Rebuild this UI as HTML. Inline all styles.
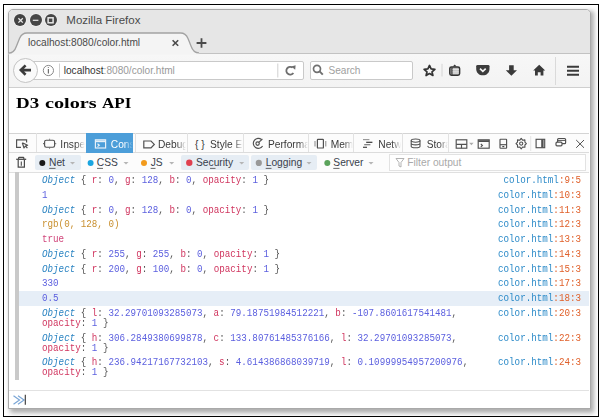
<!DOCTYPE html>
<html><head><meta charset="utf-8">
<style>
*{margin:0;padding:0;box-sizing:border-box}
html,body{width:600px;height:419px;background:#fff;overflow:hidden;position:relative;font-family:"Liberation Sans",sans-serif}
.a{position:absolute}
.t{position:absolute;white-space:pre;line-height:1}
svg{position:absolute;overflow:visible}
.mono{font-family:"Liberation Mono",monospace;font-size:10px;line-height:10px;transform:scaleX(0.922);transform-origin:0 0}
.loc{transform-origin:100% 0}
.ot{color:#2b84c2;font-style:italic}
.gy{color:#555}
.pn{color:#d0345e}
.nu{color:#5b5fdf}
.st{color:#c99030}
.bo{color:#d0447a}
.lf{color:#2b8ac8}
.ll{color:#e0602a}
.row{left:19px;width:570px}
.sel{background:#e6eef7}
.dt{font-size:10.2px;color:#3a3a3a}
.fl{font-size:10.25px;color:#393f4c}
.sep{width:1px;background:#e2e2e2}

.hd{top:94.6px;font-family:'Liberation Serif',serif;font-weight:bold;font-size:15.5px;transform-origin:0 0;color:#000}

</style></head><body>
<div class="a" style="left:4px;top:5px;width:594px;height:411px;overflow:hidden"><div class="a" style="left:6px;top:6px;width:584px;height:402px;background:#acacac;filter:blur(2.4px)"></div></div>
<!-- window -->
<div class="a" style="left:8px;top:9px;width:583px;height:400px;border:1px solid #a9a9a9;border-radius:5px 5px 0 0;background:#fff"></div>
<!-- titlebar -->
<div class="a" style="left:9px;top:10px;width:581px;height:43px;background:#e6e6e6;border-radius:4px 4px 0 0"></div>
<div class="a" style="left:14.4px;top:14.3px;width:12px;height:12px;border-radius:50%;background:#434343;box-shadow:0 0 0 0.6px #f4f4f4"></div>
<div class="a" style="left:29.6px;top:14.3px;width:12px;height:12px;border-radius:50%;background:#464646;box-shadow:0 0 0 0.6px #f4f4f4"></div>
<div class="a" style="left:44.6px;top:14.3px;width:12px;height:12px;border-radius:50%;background:#464646;box-shadow:0 0 0 0.6px #f4f4f4"></div>
<svg style="left:0;top:0" width="600" height="40"><g stroke="#e8e8e8" stroke-width="1.3" fill="none"><path d="M18.4 18.2 L22.8 22.6 M22.8 18.2 L18.4 22.6"/><path d="M32.8 20.3 H38.4" stroke-width="1.2"/><rect x="48.1" y="17.8" width="5" height="5" stroke-width="1.5"/></g></svg>
<div class="t" style="left:66.3px;top:15px;font-size:11.5px;color:#4a4a4a">Mozilla Firefox</div>
<!-- tab -->
<!-- nav toolbar -->
<div class="a" style="left:9px;top:53px;width:581px;height:35px;background:linear-gradient(#f7f7f7,#f3f3f3);border-top:1px solid #c2c2c2;border-bottom:1px solid #cfcfcf"></div>
<svg style="left:0;top:0" width="600" height="60"><path d="M8.5 54.5 V53.2 C13 53.2 15 50.5 16.5 46 L19.5 38.5 C21 35 23 33 27 33 L180.5 33 C184.5 33 186.5 35 188 38.5 L191 46 C192.5 50.5 194.5 52.9 199 52.9 V54.5 Z" fill="#f4f4f4"/><path d="M8.5 53.2 C13 53.2 15 50.5 16.5 46 L19.5 38.5 C21 35 23 33 27 33 L180.5 33 C184.5 33 186.5 35 188 38.5 L191 46 C192.5 50.5 194.5 52.9 199 52.9" fill="none" stroke="#a2a2a2" stroke-width="1.3"/></svg>
<div class="t" style="left:28px;top:38.4px;font-size:10.2px;color:#4a4a4a">localhost:8080/color.html</div>
<svg style="left:0;top:0" width="600" height="60"><g stroke="#4a4a4a" stroke-width="1.6" fill="none"><path d="M172.6 40.2 L178.2 45.8 M178.2 40.2 L172.6 45.8"/></g><g stroke="#4a4a4a" stroke-width="1.8"><path d="M196.6 43 H206.4 M201.5 38.3 V47.8"/></g></svg>
<div class="a" style="left:30px;top:61px;width:274px;height:19px;background:#fff;border:1px solid #c9c9c9;border-radius:2px"></div>
<div class="a" style="left:13px;top:57.5px;width:25px;height:25px;border-radius:50%;background:#fafafa;border:1px solid #c4c4c4"></div>
<svg style="left:0;top:0" width="600" height="90"><g fill="none" stroke="#3c3c3c" stroke-width="2.6" stroke-linejoin="miter"><path d="M21.5 70.1 H31 M25.6 65.4 L20.8 70.1 L25.6 74.8"/></g>
<circle cx="48.4" cy="70.5" r="5.1" fill="none" stroke="#8a8a8a" stroke-width="1"/><path d="M48.4 69 V73.5 M48.4 67.3 V67.9" stroke="#707070" stroke-width="1.2"/>
<path d="M59.5 63.5 V77.5" stroke="#d0d0d0" stroke-width="1"/>
<path d="M277.8 63.5 V77.5" stroke="#d0d0d0" stroke-width="1"/>
<path d="M292.6 67.6 A3.9 3.9 0 1 0 293.4 73" fill="none" stroke="#6e6e6e" stroke-width="1.8"/><path d="M291.2 66.4 L295.6 65.2 L295.2 69.8 Z" fill="#6e6e6e"/>
</svg>
<div class="t" style="left:63.75px;top:66px;font-size:10.1px;color:#9a9a9a"><span style="color:#333">localhost</span>:8080/color.html</div>
<div class="a" style="left:309.6px;top:61px;width:103px;height:18.5px;background:#fff;border:1px solid #c9c9c9;border-radius:2px"></div>
<svg style="left:0;top:0" width="600" height="90"><circle cx="317" cy="68.8" r="3.5" fill="none" stroke="#707070" stroke-width="1.7"/><path d="M319.6 71.4 L322.8 74.6" stroke="#707070" stroke-width="2"/></svg>
<div class="t" style="left:328.5px;top:66.2px;font-size:10.1px;color:#a0a0a0">Search</div>
<svg style="left:0;top:0" width="600" height="90">
<path d="M429.5 65.4 L431.1 68.9 L434.9 69.3 L432 71.8 L432.9 75.5 L429.5 73.6 L426.1 75.5 L427 71.8 L424.1 69.3 L427.9 68.9 Z" fill="none" stroke="#333" stroke-width="1.7" stroke-linejoin="round"/>
<path d="M442 63.8 V76.5" stroke="#d4d4d4"/>
<rect x="449.8" y="67" width="9.8" height="8.2" rx="1.6" fill="#bdbdbd" stroke="#333" stroke-width="1.5"/><path d="M452.8 66.6 L454.7 64.4 L456.6 66.6 Z" fill="#333"/><path d="M452 67.5 V74.8" stroke="#333" stroke-width="1.3"/><path d="M452.5 69.4 H459 M452.5 71.2 H459 M452.5 73 H459" stroke="#f0f0f0" stroke-width="0.8"/>
<path d="M477.6 64.9 H488.1 Q489.5 64.9 489.5 66.3 V68.9 C489.5 72.7 486.5 75.3 482.85 75.3 C479.2 75.3 476.2 72.7 476.2 68.9 V66.3 Q476.2 64.9 477.6 64.9 Z" fill="#3c3c3c"/><path d="M480 68.6 L482.85 71.3 L485.7 68.6" fill="none" stroke="#f4f4f4" stroke-width="1.7"/>
<path d="M509.1 65.2 H513.7 V70.2 H517 L511.4 75.8 L505.8 70.2 H509.1 Z" fill="#3a3a3a"/>
<path d="M539.2 64.8 L545.2 70.5 H543.4 V75.5 H540.6 V72.3 H537.8 V75.5 H535 V70.5 H533.2 Z" fill="#3a3a3a"/>
<path d="M555.5 57 V85" stroke="#dadada"/>
<path d="M567 66.8 H579 M567 70.8 H579 M567 74.8 H579" stroke="#3a3a3a" stroke-width="1.9"/>
</svg>
<!-- page -->
<div class="t hd" style="left:15.8px;transform:scaleX(1.223)">D3</div><div class="t hd" style="left:44.7px;transform:scaleX(1.305)">colors</div><div class="t hd" style="left:101.5px;transform:scaleX(1.10)">API</div>
<!-- devtools toolbar -->
<div class="a" style="left:9px;top:132.6px;width:580px;height:20.6px;background:#fcfcfc;border-top:1px solid #d4d4d4;border-bottom:1px solid #dcdcdc"></div>
<div class="a sep" style="left:35.5px;top:133px;height:19px"></div>
<div class="a" style="left:86px;top:133px;width:47px;height:19.5px;background:#4c9ed9"></div>
<div class="a sep" style="left:134.5px;top:133px;height:19px"></div>
<div class="a sep" style="left:186.7px;top:133px;height:19px"></div>
<div class="a sep" style="left:243px;top:133px;height:19px"></div>
<div class="a sep" style="left:308px;top:133px;height:19px"></div>
<div class="a sep" style="left:353px;top:133px;height:19px"></div>
<div class="a sep" style="left:401.7px;top:133px;height:19px"></div>
<div class="a sep" style="left:448.3px;top:133px;height:19px"></div>
<div class="a" style="left:60.3px;top:136px;width:25.2px;height:16px;overflow:hidden;-webkit-mask-image:linear-gradient(to right,#000 calc(100% - 9px),transparent);mask-image:linear-gradient(to right,#000 calc(100% - 9px),transparent)"><div class="t dt" style="left:0;top:3.7px;">Inspector</div></div>
<div class="a" style="left:110.8px;top:136px;width:22.2px;height:16px;overflow:hidden;-webkit-mask-image:linear-gradient(to right,#000 calc(100% - 9px),transparent);mask-image:linear-gradient(to right,#000 calc(100% - 9px),transparent)"><div class="t dt" style="left:0;top:3.7px;color:#fff;">Console</div></div>
<div class="a" style="left:158px;top:136px;width:28.0px;height:16px;overflow:hidden;-webkit-mask-image:linear-gradient(to right,#000 calc(100% - 9px),transparent);mask-image:linear-gradient(to right,#000 calc(100% - 9px),transparent)"><div class="t dt" style="left:0;top:3.7px;">Debugger</div></div>
<div class="a" style="left:210px;top:136px;width:33.0px;height:16px;overflow:hidden;-webkit-mask-image:linear-gradient(to right,#000 calc(100% - 9px),transparent);mask-image:linear-gradient(to right,#000 calc(100% - 9px),transparent)"><div class="t dt" style="left:0;top:3.7px;">Style Editor</div></div>
<div class="a" style="left:268px;top:136px;width:39.5px;height:16px;overflow:hidden;-webkit-mask-image:linear-gradient(to right,#000 calc(100% - 9px),transparent);mask-image:linear-gradient(to right,#000 calc(100% - 9px),transparent)"><div class="t dt" style="left:0;top:3.7px;">Performance</div></div>
<div class="a" style="left:330.7px;top:136px;width:22.3px;height:16px;overflow:hidden;-webkit-mask-image:linear-gradient(to right,#000 calc(100% - 9px),transparent);mask-image:linear-gradient(to right,#000 calc(100% - 9px),transparent)"><div class="t dt" style="left:0;top:3.7px;">Memory</div></div>
<div class="a" style="left:378.3px;top:136px;width:23.2px;height:16px;overflow:hidden;-webkit-mask-image:linear-gradient(to right,#000 calc(100% - 9px),transparent);mask-image:linear-gradient(to right,#000 calc(100% - 9px),transparent)"><div class="t dt" style="left:0;top:3.7px;">Network</div></div>
<div class="a" style="left:426.7px;top:136px;width:21.3px;height:16px;overflow:hidden;-webkit-mask-image:linear-gradient(to right,#000 calc(100% - 9px),transparent);mask-image:linear-gradient(to right,#000 calc(100% - 9px),transparent)"><div class="t dt" style="left:0;top:3.7px;">Storage</div></div>
<div class="t dt" style="left:195px;top:139.7px">{ }</div>
<svg style="left:0;top:0" width="600" height="180"><g fill="none" stroke="#505050" stroke-width="1.15">
<path d="M21 147.3 H16.6 V139.8 H26.6 V142.5"/><path d="M22.3 142.8 L27.6 145.2 L25.4 146 L27.4 148.2 M22.3 142.8 L24 148 L25.4 146" stroke-width="1.2" stroke-linejoin="round"/>
<rect x="44.6" y="140.2" width="10" height="7" rx="1.6"/><path d="M44 143.7 H43 M55.2 143.7 H56.2 M49.6 139.6 V138.8 M49.6 147.8 V148.6" stroke-width="1"/>
<g stroke="#e6f0f8" stroke-width="1.2"><rect x="95.4" y="139.8" width="10.2" height="8.2"/><path d="M95.4 141.3 H105.6" stroke-width="1.8"/><path d="M97.5 143.8 L99.3 145.2 L97.5 146.6"/></g>
<path d="M143.8 141 H151 L154.3 144.4 L151 147.8 H143.8 Z" stroke-width="1.2"/>
<path d="M261.6 139.6 A5 5 0 1 0 262.6 146" /><circle cx="257.6" cy="143.6" r="1.7"/><path d="M258.8 142.4 L262.4 139" stroke-width="1.1"/>
<rect x="317.4" y="139.4" width="6" height="8.6" rx="0.6" stroke-width="1.2"/><path d="M315 141 V146.5 M325.8 141 V146.5" stroke="#888" stroke-width="1"/>
<g stroke-width="1.2"><path d="M363 139.6 H369.4" stroke="#999"/><path d="M366.2 142.3 H372.4" stroke="#333"/><path d="M364.2 144.7 H370.4" stroke="#777"/><path d="M363 147.3 H367" stroke="#444"/></g>
<g stroke-width="1.1"><ellipse cx="415.6" cy="140.6" rx="4.4" ry="1.6"/><path d="M411.2 140.6 V146.4 M420 140.6 V146.4 M411.2 143.3 A4.4 1.6 0 0 0 420 143.3 M411.2 146.2 A4.4 1.6 0 0 0 420 146.2"/></g>
<rect x="456.2" y="139.8" width="10.6" height="8.4"/><path d="M456.2 144.3 H466.8 M461.5 144.3 V148.2"/><path d="M469.2 142.8 H473.6 L471.4 145.2 Z" fill="#aaa" stroke="none"/>
<rect x="478.2" y="139.8" width="11" height="8.4"/><path d="M478.2 141.1 H489.2" stroke-width="1.8"/><path d="M480.8 144 L482.4 145.4 L480.8 146.8" stroke-width="1.1"/>
<rect x="500" y="139.2" width="6.6" height="9" rx="0.5"/><path d="M500 144.7 H506.6"/><rect x="502.3" y="146" width="2" height="1.2" fill="#4a4a4a" stroke="none"/>
<circle cx="521.2" cy="143.6" r="1.6" stroke-width="1.1"/><path d="M521.2 138.4 L522.6 140.2 L524.9 139.9 L524.9 142.2 L526.4 143.6 L524.9 145 L524.9 147.3 L522.6 147 L521.2 148.8 L519.8 147 L517.5 147.3 L517.5 145 L516 143.6 L517.5 142.2 L517.5 139.9 L519.8 140.2 Z" stroke-linejoin="round" stroke-width="1.1"/>
<path d="M530.7 136 V151" stroke="#e4e4e4" stroke-width="1"/>
<rect x="536.1" y="139.3" width="8.6" height="8.4"/><path d="M542.4 139.3 V147.7" stroke-width="2.4"/>
<rect x="557.6" y="138.5" width="8" height="5.2" rx="1" stroke-width="1.2"/><path d="M557.6 140.4 H565.6" stroke-width="1"/><rect x="556" y="142.2" width="6" height="3.6" rx="1" fill="#fcfcfc" stroke-width="1.2"/>
<path d="M576.2 140 L584 147.8 M584 140 L576.2 147.8" stroke-width="1"/>
</g></svg>
<!-- filter bar -->
<div class="a" style="left:9px;top:153px;width:580px;height:20px;background:#fcfcfc;border-bottom:1px solid #e0e0e0"></div>
<div class="a" style="left:34.5px;top:155.3px;width:46px;height:15.2px;background:#e6edf4;border-radius:2px"></div>
<div class="a" style="left:181.2px;top:155.3px;width:67.6px;height:15.2px;background:#e6edf4;border-radius:2px"></div>
<div class="a" style="left:250.9px;top:155.3px;width:66.5px;height:15.2px;background:#e6edf4;border-radius:2px"></div>
<div class="a" style="left:389.3px;top:154.4px;width:197px;height:16.2px;background:#fff;border:1px solid #e2e2e2"></div>
<svg style="left:0;top:0" width="600" height="180">
<g fill="none" stroke="#4a4a4a" stroke-width="1.2"><path d="M16.2 159.3 H26.2" stroke-width="1.3"/><path d="M18.6 159 V157.9 Q18.6 157.3 19.2 157.3 H23.2 Q23.8 157.3 23.8 157.9 V159" /><path d="M18.2 160 V167.2 H24.4 V160"/><path d="M21.3 161.5 V165.8" stroke-width="1.1"/></g>
<circle cx="42.3" cy="163" r="3" fill="#1a1a1a"/>
<circle cx="90.6" cy="163" r="3" fill="#1aa5e0"/>
<circle cx="144" cy="163" r="3" fill="#f29b1d"/>
<circle cx="189.3" cy="162.8" r="3.2" fill="#e0404f"/>
<circle cx="258.8" cy="162.9" r="3.1" fill="#999"/>
<circle cx="327.3" cy="163" r="3" fill="#5ba35b"/>
<g fill="#b5b5b5"><path d="M70 162 H75 L72.5 164.5 Z"/><path d="M123.5 162 H128.5 L126 164.5 Z"/><path d="M169.2 162 H174.2 L171.7 164.5 Z"/><path d="M239.2 162 H244.2 L241.7 164.5 Z"/><path d="M306.5 162 H311.5 L309 164.5 Z"/><path d="M368.5 162 H373.5 L371 164.5 Z"/></g>
<path d="M396 158.5 H404 L401 162.5 V167 L399 166 V162.5 Z" fill="none" stroke="#aaa" stroke-width="0.9"/>
<g stroke="#444" stroke-width="0.8"><path d="M49.2 168.4 H55.5"/><path d="M97 168.4 H103"/><path d="M150.7 168.4 H155.5"/><path d="M210 168.4 H215.5"/><path d="M265.7 168.4 H271.5"/><path d="M333.3 168.4 H339.5"/></g>
</svg>
<div class="t fl" style="left:49px;top:157.6px">Net</div>
<div class="t fl" style="left:96.8px;top:157.6px">CSS</div>
<div class="t fl" style="left:150.7px;top:157.6px">JS</div>
<div class="t fl" style="left:196px;top:157.6px">Security</div>
<div class="t fl" style="left:265.7px;top:157.6px">Logging</div>
<div class="t fl" style="left:333.3px;top:157.6px">Server</div>
<div class="t fl" style="left:407.3px;top:157.6px;color:#a9a9a9">Filter output</div>
<!-- input line -->
<div class="a" style="left:9px;top:390px;width:580px;height:1.4px;background:#e2e2e2"></div>
<svg style="left:0;top:0" width="600" height="419"><g fill="none" stroke="#7aa6d6" stroke-width="1.2"><path d="M13.5 395.8 L19.5 400 L13.5 404.2 M18 395.8 L24 400 L18 404.2"/></g><path d="M25.3 394.8 V404.8" stroke="#333" stroke-width="1.1"/></svg>

<div class="a" style="left:15px;top:172px;width:4px;height:208px;background:#c9c9c9"></div>
<div class="a row" style="top:173.00px;height:14.75px"></div>
<div class="t mono" style="left:41.7px;top:176.20px"><i class="ot">Object</i><span class="gy"> { </span><span class="pn">r</span><span class="gy">: </span><span class="nu">0</span><span class="gy">, </span><span class="pn">g</span><span class="gy">: </span><span class="nu">128</span><span class="gy">, </span><span class="pn">b</span><span class="gy">: </span><span class="nu">0</span><span class="gy">, </span><span class="pn">opacity</span><span class="gy">: </span><span class="nu">1</span><span class="gy"> }</span></div>
<div class="t mono loc" style="right:18.8px;top:176.20px"><span class="lf">color.html</span><span class="ll">:9:5</span></div>
<div class="a row" style="top:187.75px;height:14.75px"></div>
<div class="t mono" style="left:41.7px;top:190.95px"><span class="nu">1</span></div>
<div class="t mono loc" style="right:18.8px;top:190.95px"><span class="lf">color.html</span><span class="ll">:10:3</span></div>
<div class="a row" style="top:202.50px;height:14.75px"></div>
<div class="t mono" style="left:41.7px;top:205.70px"><i class="ot">Object</i><span class="gy"> { </span><span class="pn">r</span><span class="gy">: </span><span class="nu">0</span><span class="gy">, </span><span class="pn">g</span><span class="gy">: </span><span class="nu">128</span><span class="gy">, </span><span class="pn">b</span><span class="gy">: </span><span class="nu">0</span><span class="gy">, </span><span class="pn">opacity</span><span class="gy">: </span><span class="nu">1</span><span class="gy"> }</span></div>
<div class="t mono loc" style="right:18.8px;top:205.70px"><span class="lf">color.html</span><span class="ll">:11:3</span></div>
<div class="a row" style="top:217.25px;height:14.75px"></div>
<div class="t mono" style="left:41.7px;top:220.45px"><span class="st">rgb(0, 128, 0)</span></div>
<div class="t mono loc" style="right:18.8px;top:220.45px"><span class="lf">color.html</span><span class="ll">:12:3</span></div>
<div class="a row" style="top:232.00px;height:14.75px"></div>
<div class="t mono" style="left:41.7px;top:235.20px"><span class="bo">true</span></div>
<div class="t mono loc" style="right:18.8px;top:235.20px"><span class="lf">color.html</span><span class="ll">:13:3</span></div>
<div class="a row" style="top:246.75px;height:14.75px"></div>
<div class="t mono" style="left:41.7px;top:249.95px"><i class="ot">Object</i><span class="gy"> { </span><span class="pn">r</span><span class="gy">: </span><span class="nu">255</span><span class="gy">, </span><span class="pn">g</span><span class="gy">: </span><span class="nu">255</span><span class="gy">, </span><span class="pn">b</span><span class="gy">: </span><span class="nu">0</span><span class="gy">, </span><span class="pn">opacity</span><span class="gy">: </span><span class="nu">1</span><span class="gy"> }</span></div>
<div class="t mono loc" style="right:18.8px;top:249.95px"><span class="lf">color.html</span><span class="ll">:14:3</span></div>
<div class="a row" style="top:261.50px;height:14.75px"></div>
<div class="t mono" style="left:41.7px;top:264.70px"><i class="ot">Object</i><span class="gy"> { </span><span class="pn">r</span><span class="gy">: </span><span class="nu">200</span><span class="gy">, </span><span class="pn">g</span><span class="gy">: </span><span class="nu">100</span><span class="gy">, </span><span class="pn">b</span><span class="gy">: </span><span class="nu">0</span><span class="gy">, </span><span class="pn">opacity</span><span class="gy">: </span><span class="nu">1</span><span class="gy"> }</span></div>
<div class="t mono loc" style="right:18.8px;top:264.70px"><span class="lf">color.html</span><span class="ll">:15:3</span></div>
<div class="a row" style="top:276.25px;height:14.75px"></div>
<div class="t mono" style="left:41.7px;top:279.45px"><span class="nu">330</span></div>
<div class="t mono loc" style="right:18.8px;top:279.45px"><span class="lf">color.html</span><span class="ll">:17:3</span></div>
<div class="a row sel" style="top:291.00px;height:14.75px"></div>
<div class="t mono" style="left:41.7px;top:294.20px"><span class="nu">0.5</span></div>
<div class="t mono loc" style="right:18.8px;top:294.20px"><span class="lf">color.html</span><span class="ll">:18:3</span></div>
<div class="a row" style="top:305.75px;height:24.75px"></div>
<div class="t mono" style="left:41.7px;top:308.95px"><i class="ot">Object</i><span class="gy"> { </span><span class="pn">l</span><span class="gy">: </span><span class="nu">32.29701093285073</span><span class="gy">, </span><span class="pn">a</span><span class="gy">: </span><span class="nu">79.18751984512221</span><span class="gy">, </span><span class="pn">b</span><span class="gy">: </span><span class="nu">-107.8601617541481</span><span class="gy">,</span></div>
<div class="t mono" style="left:41.7px;top:318.95px"><span class="pn">opacity</span><span class="gy">: </span><span class="nu">1</span><span class="gy"> }</span></div>
<div class="t mono loc" style="right:18.8px;top:308.95px"><span class="lf">color.html</span><span class="ll">:20:3</span></div>
<div class="a row" style="top:330.50px;height:24.75px"></div>
<div class="t mono" style="left:41.7px;top:333.70px"><i class="ot">Object</i><span class="gy"> { </span><span class="pn">h</span><span class="gy">: </span><span class="nu">306.2849380699878</span><span class="gy">, </span><span class="pn">c</span><span class="gy">: </span><span class="nu">133.80761485376166</span><span class="gy">, </span><span class="pn">l</span><span class="gy">: </span><span class="nu">32.29701093285073</span><span class="gy">,</span></div>
<div class="t mono" style="left:41.7px;top:343.70px"><span class="pn">opacity</span><span class="gy">: </span><span class="nu">1</span><span class="gy"> }</span></div>
<div class="t mono loc" style="right:18.8px;top:333.70px"><span class="lf">color.html</span><span class="ll">:22:3</span></div>
<div class="a row" style="top:355.25px;height:24.75px"></div>
<div class="t mono" style="left:41.7px;top:358.45px"><i class="ot">Object</i><span class="gy"> { </span><span class="pn">h</span><span class="gy">: </span><span class="nu">236.94217167732103</span><span class="gy">, </span><span class="pn">s</span><span class="gy">: </span><span class="nu">4.614386868039719</span><span class="gy">, </span><span class="pn">l</span><span class="gy">: </span><span class="nu">0.10999954957200976</span><span class="gy">,</span></div>
<div class="t mono" style="left:41.7px;top:368.45px"><span class="pn">opacity</span><span class="gy">: </span><span class="nu">1</span><span class="gy"> }</span></div>
<div class="t mono loc" style="right:18.8px;top:358.45px"><span class="lf">color.html</span><span class="ll">:24:3</span></div>

<div class="a" style="left:3px;top:4px;width:596px;height:413px;border:1px solid #000"></div>
</body></html>
